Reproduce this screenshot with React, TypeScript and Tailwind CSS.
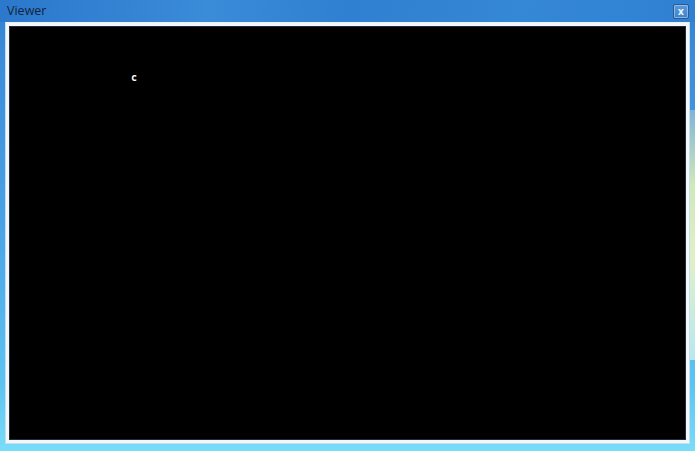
export default function App() {
  return (
    <div
      className="relative w-[695px] h-[451px] flex flex-col overflow-hidden"
      style={{ fontFamily: '"Open Sans", "Liberation Sans", sans-serif' }}
    >
      <div className="absolute inset-0 bg-[linear-gradient(180deg,#2f7fd3_0%,#3a8ad9_10%,#4aa3e6_50%,#5cc4f2_85%,#79dcf9_100%)]" />
      <div className="absolute inset-x-0 top-0 h-[22px] bg-[linear-gradient(100deg,#2b78cc_0%,#3a8bd8_30%,#2f80d0_50%,#3588d6_75%,#2f80d2_100%)]" />
      <div className="absolute right-0 top-[110px] w-[5px] h-[250px] bg-[linear-gradient(180deg,#7fb4d8,#cfe9b8_30%,#dff0c8_60%,#b7e8f0_100%)]" />
      <div className="relative h-[22px] flex items-center pl-[7px] pr-[6px]">
        <span className="text-[12.5px] text-[#15233a] leading-none mt-[1px]">Viewer</span>
        <div className="ml-auto w-[16px] h-[15px] mt-[1px] border border-[#2a5a90] rounded-[2px] bg-[linear-gradient(180deg,#5c9ad9,#3f82cc)] shadow-[inset_0_0_0_1px_rgba(200,225,250,0.5)] flex items-center justify-center">
          <span className="text-[#eef6ff] text-[10px] font-bold leading-none mt-[-2px]">x</span>
        </div>
      </div>
      <div className="relative flex-1 mx-[5px] mb-[7px] border border-[#c9dcec] border-t-[#e6f1fa]">
        <div className="w-full h-full bg-[#f4f7fa] p-[3px] pl-[3px]">
          <div className="w-full h-full bg-black border border-[#1d2b3a] relative">
            <span
              className="absolute left-[121px] top-[46px] text-white text-[10px] font-bold leading-none"
              style={{ fontFamily: '"DejaVu Sans Mono", monospace' }}
            >
              c
            </span>
          </div>
        </div>
      </div>
    </div>
  );
}
